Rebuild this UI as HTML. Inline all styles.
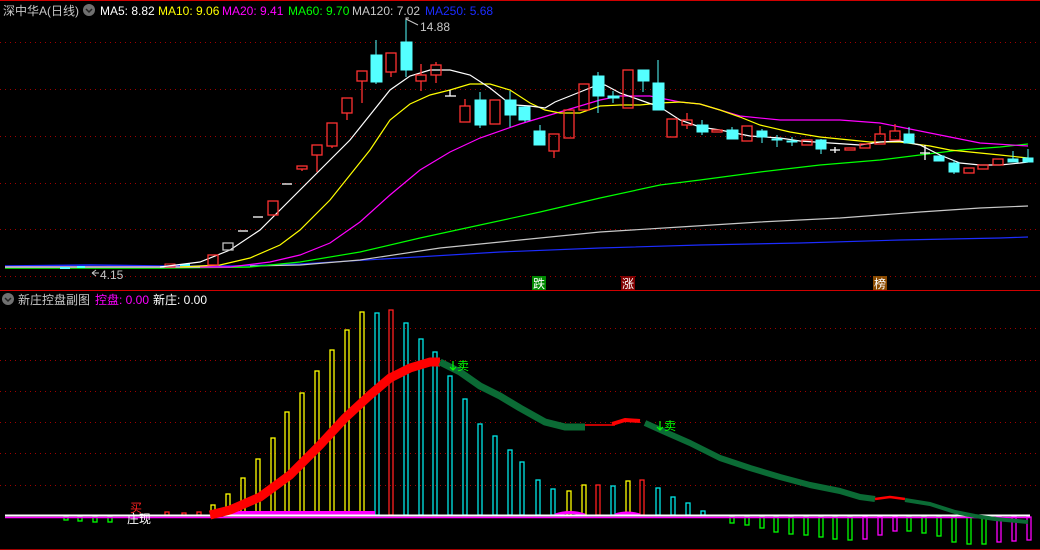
<!DOCTYPE html>
<html><head><meta charset="utf-8"><style>
html,body{margin:0;padding:0;background:#000;width:1040px;height:550px;overflow:hidden}
svg{display:block}
text{font-family:"Liberation Sans","Noto Sans CJK SC",sans-serif;font-size:12px}
</style></head><body>
<svg width="1040" height="550" viewBox="0 0 1040 550" xmlns="http://www.w3.org/2000/svg">
<rect width="1040" height="550" fill="#000"/>
<g stroke="#a00000" stroke-width="1" stroke-dasharray="1,4">
<line x1="0" y1="42.5" x2="1040" y2="42.5"/><line x1="0" y1="89.5" x2="1040" y2="89.5"/><line x1="0" y1="136.5" x2="1040" y2="136.5"/><line x1="0" y1="183.5" x2="1040" y2="183.5"/><line x1="0" y1="229.5" x2="1040" y2="229.5"/><line x1="0" y1="276.5" x2="1040" y2="276.5"/>
<line x1="0" y1="328.5" x2="1040" y2="328.5"/><line x1="0" y1="360.5" x2="1040" y2="360.5"/><line x1="0" y1="391.5" x2="1040" y2="391.5"/><line x1="0" y1="422.5" x2="1040" y2="422.5"/><line x1="0" y1="453.5" x2="1040" y2="453.5"/><line x1="0" y1="485.5" x2="1040" y2="485.5"/>
</g>
<line x1="0" y1="290.5" x2="1040" y2="290.5" stroke="#d00000"/>
<line x1="0" y1="549.5" x2="1040" y2="549.5" stroke="#a00000"/>
<line x1="0" y1="0.5" x2="1040" y2="0.5" stroke="#d00000"/>

<text x="3" y="15" fill="#c8c8c8">深中华A(日线)</text>
<circle cx="89" cy="10" r="6" fill="#707070"/><path d="M86 9 l3 3 l3 -3" stroke="#222" stroke-width="1.5" fill="none"/>
<text x="100" y="15" fill="#fff">MA5: 8.82</text>
<text x="158" y="15" fill="#ffff00">MA10: 9.06</text>
<text x="222" y="15" fill="#ff00ff">MA20: 9.41</text>
<text x="288" y="15" fill="#00ff00">MA60: 9.70</text>
<text x="352" y="15" fill="#c8c8c8">MA120: 7.02</text>
<text x="425" y="15" fill="#1c2cff">MA250: 5.68</text>
<text x="420" y="31" fill="#c8c8c8">14.88</text>
<path d="M406 21 v-3 h3 M406 19 l12 6" stroke="#c8c8c8" fill="none"/>
<text x="100" y="279" fill="#c8c8c8">4.15</text>
<path d="M92 273 l4 -3 M92 273 l4 3 M92 273 h7" stroke="#c8c8c8" fill="none"/>

<g fill="none" stroke-width="1.5">
<polyline points="5,266 90,265 160,266 230,266" stroke="#1c2cff"/>
<polyline points="5,268 90,268 160,268 250,267" stroke="#00ff00"/>
<polyline points="5,267 90,267 230,267" stroke="#ff00ff"/>
<polyline points="5,267 200,267" stroke="#c8c8c8"/>
</g>
<rect x="60" y="267" width="10" height="2" fill="#54ffff"/>
<rect x="77" y="266" width="8" height="2" fill="#54ffff"/>
<rect x="165" y="264" width="10" height="3" fill="none" stroke="#ff3232"/>
<rect x="180" y="264" width="10" height="2" fill="#54ffff"/>

<g fill="none" stroke-width="1.2">
<polyline stroke="#1c2cff" points="230,266 300,264 400,258 500,252 600,248 700,245 800,243 900,240 1000,238 1028,237"/>
<polyline stroke="#c8c8c8" points="250,266 300,265 360,260 440,248 520,240 600,232 680,227 760,222 840,218 920,212 980,208 1028,206"/>
<polyline stroke="#00ff00" points="250,267 300,262 360,252 420,238 480,225 540,212 600,198 660,185 700,180 760,172 820,165 880,160 920,155 960,150 1000,147 1028,144"/>
<polyline stroke="#ff00ff" points="230,267 270,262 300,255 330,243 360,222 390,195 420,170 450,152 480,138 520,124 560,112 600,100 620,96 650,96 680,102 700,104 740,116 780,120 840,120 880,123 900,127 940,135 980,143 1028,146"/>
<polyline stroke="#ffff00" points="180,267 220,265 250,258 280,245 300,230 330,200 350,175 370,150 390,120 410,104 430,95 450,90 470,84 490,84 510,90 530,103 545,110 560,113 580,113 600,106 620,105 640,105 660,103 680,102 700,104 720,110 740,117 760,125 790,132 820,137 850,140 870,142 900,142 930,146 950,150 970,152 1000,155 1028,158"/>
<polyline stroke="#ffffff" points="160,267 200,262 230,250 260,230 290,200 320,170 350,140 370,115 390,90 410,76 430,70 450,70 470,75 490,88 505,100 515,105 530,106 545,108 555,102 565,98 580,92 595,86 605,85 620,93 640,100 660,107 680,120 700,127 720,130 750,136 780,138 800,141 830,143 860,145 880,142 900,141 920,145 940,155 960,163 980,165 1000,165 1020,163 1028,162"/>
</g>

<g stroke="#ff3232" fill="none" stroke-width="1.3">
<rect x="208" y="255" width="10" height="10"/>
<rect x="223" y="243" width="10" height="7" stroke="#c0c0c0"/>
<rect x="268" y="201" width="10" height="14"/>
<rect x="297" y="166" width="10" height="3"/><line x1="302" y1="169" x2="302" y2="171"/>
<rect x="312" y="145" width="10" height="10"/><line x1="317" y1="155" x2="317" y2="172"/>
<rect x="327" y="123" width="10" height="23"/><line x1="332" y1="146" x2="332" y2="148"/>
<rect x="342" y="98" width="10" height="15"/><line x1="347" y1="113" x2="347" y2="120"/>
<rect x="357" y="71" width="10" height="10"/><line x1="362" y1="81" x2="362" y2="103"/>
<rect x="386" y="53" width="10" height="19"/><line x1="391" y1="72" x2="391" y2="77"/>
<rect x="416" y="75" width="10" height="6"/><line x1="421" y1="64" x2="421" y2="75"/><line x1="421" y1="81" x2="421" y2="91"/>
<rect x="431" y="65" width="10" height="10"/><line x1="436" y1="62" x2="436" y2="65"/><line x1="436" y1="75" x2="436" y2="83"/>
<rect x="460" y="106" width="10" height="16"/><line x1="465" y1="99" x2="465" y2="106"/>
<rect x="490" y="100" width="10" height="24"/>
<rect x="549" y="134" width="10" height="17"/><line x1="554" y1="151" x2="554" y2="158"/>
<rect x="564" y="110" width="10" height="28"/>
<rect x="579" y="84" width="10" height="26"/>
<rect x="623" y="70" width="10" height="38"/>
<rect x="667" y="119" width="10" height="18"/>
<rect x="682" y="120" width="10" height="5"/><line x1="687" y1="113" x2="687" y2="120"/><line x1="687" y1="125" x2="687" y2="129"/>
<rect x="712" y="130" width="10" height="2"/>
<rect x="742" y="126" width="10" height="15"/>
<rect x="802" y="140" width="10" height="5"/>
<rect x="845" y="148" width="10" height="2"/>
<rect x="860" y="144" width="10" height="4"/>
<rect x="875" y="134" width="10" height="10"/><line x1="880" y1="126" x2="880" y2="134"/>
<rect x="890" y="131" width="10" height="9"/><line x1="895" y1="124" x2="895" y2="131"/>
<rect x="964" y="168" width="10" height="5"/>
<rect x="978" y="165" width="10" height="4"/>
<rect x="993" y="159" width="10" height="6"/>
</g>
<g fill="#54ffff" stroke="#54ffff" stroke-width="1">
<line x1="376" y1="40" x2="376" y2="84"/><rect x="371" y="55" width="11" height="27"/>
<line x1="406" y1="20" x2="406" y2="77"/><rect x="401" y="42" width="11" height="28"/>
<line x1="480" y1="92" x2="480" y2="128"/><rect x="475" y="100" width="11" height="25"/>
<line x1="510" y1="91" x2="510" y2="127"/><rect x="505" y="100" width="11" height="15"/>
<line x1="525" y1="106" x2="525" y2="122"/><rect x="519" y="107" width="11" height="13"/>
<line x1="540" y1="125" x2="540" y2="145"/><rect x="534" y="131" width="11" height="14"/>
<line x1="598" y1="72" x2="598" y2="113"/><rect x="593" y="76" width="11" height="20"/>
<line x1="613" y1="91" x2="613" y2="103"/><rect x="608" y="96" width="11" height="2"/>
<line x1="643" y1="70" x2="643" y2="92"/><rect x="638" y="70" width="11" height="11"/>
<line x1="658" y1="60" x2="658" y2="110"/><rect x="653" y="83" width="11" height="27"/>
<line x1="702" y1="120" x2="702" y2="135"/><rect x="697" y="125" width="11" height="7"/>
<line x1="732" y1="127" x2="732" y2="139"/><rect x="727" y="130" width="11" height="9"/>
<line x1="762" y1="129" x2="762" y2="143"/><rect x="757" y="131" width="10" height="6"/>
<line x1="777" y1="135" x2="777" y2="147"/><rect x="772" y="139" width="10" height="1"/>
<line x1="792" y1="137" x2="792" y2="146"/><rect x="787" y="141" width="10" height="1"/>
<line x1="821" y1="139" x2="821" y2="154"/><rect x="816" y="140" width="10" height="9"/>
<line x1="909" y1="127" x2="909" y2="143"/><rect x="904" y="134" width="10" height="9"/>
<rect x="934" y="156" width="10" height="5"/>
<line x1="954" y1="160" x2="954" y2="174"/><rect x="949" y="163" width="10" height="9"/>
<line x1="1013" y1="151" x2="1013" y2="162"/><rect x="1008" y="159" width="10" height="3"/>
<line x1="1028" y1="149" x2="1028" y2="162"/><rect x="1023" y="158" width="10" height="4"/>
</g>
<g stroke="#fff" stroke-width="1.3">
<line x1="238" y1="231" x2="248" y2="231"/><line x1="253" y1="217" x2="263" y2="217"/><line x1="282" y1="184" x2="292" y2="184"/>
<line x1="445" y1="96" x2="456" y2="96"/><line x1="450" y1="90" x2="450" y2="96"/>
<line x1="830" y1="150" x2="840" y2="150"/><line x1="835" y1="147" x2="835" y2="153"/>
<line x1="920" y1="153" x2="930" y2="153"/><line x1="925" y1="145" x2="925" y2="160"/>
</g>
<rect x="532" y="276" width="14" height="14" fill="#008a00"/><text x="533" y="288" fill="#fff" font-size="12">跌</text>
<rect x="621" y="276" width="14" height="14" fill="#800000"/><text x="622" y="288" fill="#fff" font-size="12">涨</text>
<rect x="873" y="276" width="14" height="14" fill="#8a4a00"/><text x="874" y="288" fill="#fff" font-size="12">榜</text>

<circle cx="8" cy="299" r="6" fill="#707070"/><path d="M5 298 l3 3 l3 -3" stroke="#222" stroke-width="1.5" fill="none"/>
<text x="18" y="304" fill="#c8c8c8">新庄控盘副图</text>
<text x="95" y="304" fill="#ff00ff">控盘: 0.00</text>
<text x="153" y="304" fill="#fff">新庄: 0.00</text>

<g fill="none" stroke-width="1.3">
<g stroke="#ffff00">
<rect x="211" y="505" width="4" height="10"/><rect x="226" y="494" width="4" height="21"/><rect x="241" y="478" width="4" height="37"/><rect x="256" y="459" width="4" height="56"/><rect x="271" y="438" width="4" height="77"/><rect x="285" y="412" width="4" height="103"/><rect x="300" y="393" width="4" height="122"/><rect x="315" y="371" width="4" height="144"/><rect x="330" y="350" width="4" height="165"/><rect x="345" y="330" width="4" height="185"/><rect x="360" y="312" width="4" height="203"/>
<rect x="567" y="491" width="4" height="24"/><rect x="582" y="485" width="4" height="30"/><rect x="626" y="481" width="4" height="34"/>
</g>
<g stroke="#00e8e8">
<rect x="375" y="313" width="4" height="202"/><rect x="404" y="323" width="4" height="192"/><rect x="419" y="339" width="4" height="176"/><rect x="433" y="352" width="4" height="163"/><rect x="448" y="376" width="4" height="139"/><rect x="463" y="399" width="4" height="116"/><rect x="478" y="424" width="4" height="91"/><rect x="493" y="436" width="4" height="79"/><rect x="508" y="450" width="4" height="65"/><rect x="520" y="462" width="4" height="53"/><rect x="536" y="480" width="4" height="35"/><rect x="551" y="489" width="4" height="26"/><rect x="611" y="486" width="4" height="29"/><rect x="656" y="488" width="4" height="27"/><rect x="671" y="497" width="4" height="18"/><rect x="686" y="503" width="4" height="12"/><rect x="701" y="511" width="4" height="4"/>
</g>
<g stroke="#ff2020">
<rect x="389" y="310" width="4" height="205"/><rect x="596" y="485" width="4" height="30"/><rect x="640" y="480" width="4" height="35"/>
<rect x="165" y="512" width="4" height="3"/><rect x="182" y="513" width="4" height="2"/><rect x="197" y="512" width="4" height="3"/>
</g>
<g stroke="#00ff00">
<rect x="64" y="517" width="4" height="3"/><rect x="78" y="517" width="4" height="4"/><rect x="93" y="517" width="4" height="5"/><rect x="108" y="517" width="4" height="5"/>
<rect x="730" y="517" width="4" height="6"/><rect x="745" y="517" width="4" height="8"/><rect x="760" y="517" width="4" height="11"/><rect x="774" y="517" width="4" height="15"/><rect x="789" y="517" width="4" height="17"/><rect x="804" y="517" width="4" height="18"/><rect x="819" y="517" width="4" height="20"/><rect x="833" y="517" width="4" height="22"/><rect x="848" y="517" width="4" height="23"/><rect x="907" y="517" width="4" height="14"/><rect x="922" y="517" width="4" height="16"/><rect x="937" y="517" width="4" height="19"/><rect x="952" y="517" width="4" height="25"/><rect x="967" y="517" width="4" height="27"/><rect x="982" y="517" width="4" height="27"/>
</g>
<g stroke="#ff00ff">
<rect x="863" y="517" width="4" height="22"/><rect x="878" y="517" width="4" height="18"/><rect x="893" y="517" width="4" height="14"/><rect x="997" y="517" width="4" height="25"/><rect x="1012" y="517" width="4" height="24"/><rect x="1027" y="517" width="4" height="23"/>
</g>
</g>
<rect x="215" y="511" width="160" height="4" fill="#ff00ff"/>
<path d="M555 515 q15 -5 30 0 M615 515 q12 -4 25 0" stroke="#ff00ff" stroke-width="3" fill="none"/>
<line x1="5" y1="517.5" x2="1030" y2="517.5" stroke="#ff00ff" stroke-width="1.5"/>
<line x1="5" y1="515.5" x2="1030" y2="515.5" stroke="#fff" stroke-width="2"/>
<g fill="none" stroke-linejoin="round">
<polyline stroke="#ff0000" stroke-width="9" points="210,515 230,510 260,497 290,475 320,445 345,418 370,395 390,378 410,368 430,362 440,362"/>
<polyline stroke="#0b6b35" stroke-width="7" points="440,362 460,372 480,386 500,396 520,408 545,422 565,427 585,427"/>
<line x1="585" y1="425" x2="615" y2="425" stroke="#ff0000" stroke-width="1.5"/>
<polyline stroke="#ff0000" stroke-width="4" points="612,424 625,420 640,421"/>
<polyline stroke="#0b6b35" stroke-width="6" points="645,423 665,432 690,443 720,458 750,468 780,477 810,485 840,491 860,497 875,499"/>
<polyline stroke="#ff0000" stroke-width="2.5" points="875,499 890,497 905,499"/>
<polyline stroke="#0b6b35" stroke-width="4" points="905,500 930,504 955,512 975,516 995,519 1028,522"/>
</g>
<path d="M453 361 v9 M450 367 l3 3 l3 -3 M660 421 v9 M657 427 l3 3 l3 -3" stroke="#00ff00" stroke-width="1.2" fill="none"/>
<text x="457" y="370" fill="#00ff00" font-size="12">卖</text>
<text x="664" y="430" fill="#00ff00" font-size="12">卖</text>
<text x="130" y="512" fill="#ff2020" font-size="9">买</text>
<text x="127" y="523" fill="#fff" font-size="12">庄现</text>
</svg>
</body></html>
